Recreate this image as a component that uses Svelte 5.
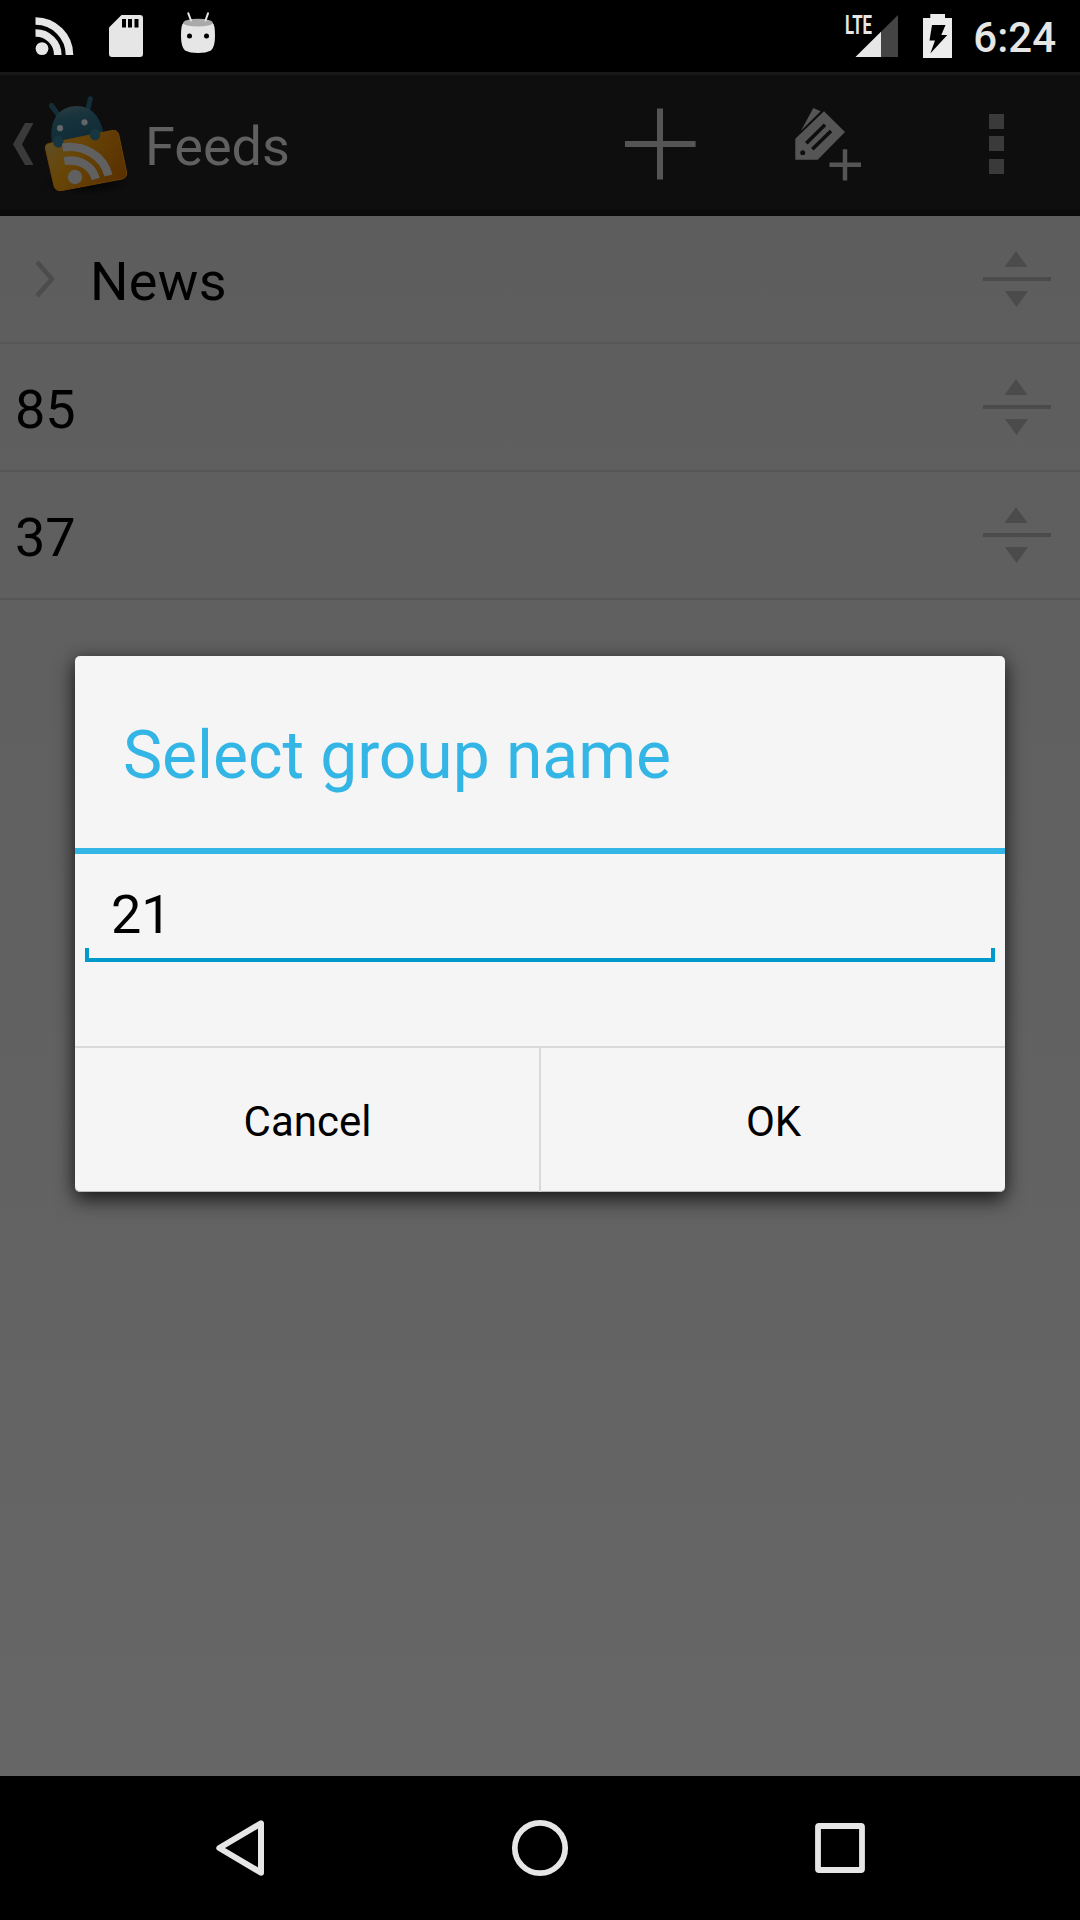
<script>
  const rows = [
    { label: 'News', group: true },
    { label: '85', group: false },
    { label: '37', group: false }
  ];
  let groupName = $state('21');
</script>

<div class="screen">
  <header class="status">
    <div class="notifications">
      <svg width="39" height="38" viewBox="35 17 39 38">
        <circle cx="42" cy="48.6" r="6.4" fill="#e6e6e6" />
        <path d="M35.5 21A34 34 0 0 1 69.5 55M35.5 33A22 22 0 0 1 57.8 55" fill="none" stroke="#e6e6e6" stroke-width="7.6" />
      </svg>
      <svg width="34" height="42" viewBox="109 15 34 42">
        <path d="M121.5 15H140a3 3 0 0 1 3 3V54a3 3 0 0 1-3 3H112a3 3 0 0 1-3-3V27.5Z" fill="#e6e6e6" />
        <path d="M122 19h4v8.500h-4zM128 19h4v8.500h-4zM134.500 19h4v8.500h-4z" fill="#000" />
      </svg>
      <svg width="34" height="42" viewBox="181 12 34 42">
        <path d="M183.500 23Q181 24 181 36Q181 47 185 50.500Q190 53 198 53Q206 53 211 50.500Q215 47 215 36Q215 24 212.500 23Z" fill="#e6e6e6" />
        <ellipse cx="198" cy="22.700" rx="14.800" ry="3.900" fill="#aaa" />
        <path d="M188.300 13.300L191 20.500M208 13.300L205.500 20.500" stroke="#e6e6e6" stroke-width="2" stroke-linecap="round" />
        <circle cx="189.500" cy="36" r="2.500" fill="#000" />
        <circle cx="206.500" cy="36" r="2.500" fill="#000" />
      </svg>
    </div>
    <div class="system">
      <svg width="57" height="60" viewBox="841 6 57 60">
        <path d="M855.500 57L898 15V57Z" fill="#444" />
        <path d="M855.500 57L881 31.800V57Z" fill="#e6e6e6" />
        <text class="lte" x="845" y="33.800" textLength="27" lengthAdjust="spacingAndGlyphs">LTE</text>
      </svg>
      <svg width="29" height="44" viewBox="923 14 29 44">
        <path d="M923 18H930.300V14H945V18H952V58H923Z" fill="#ececec" />
        <path d="M932 25H945.500L941.300 35H947.300L930.300 53.500L935 40.500H929.500Z" fill="#000" />
      </svg>
      <span class="clock">6:24</span>
    </div>
  </header>

  <nav class="actionbar">
    <svg class="up" width="21" height="42" viewBox="13 123 21 42">
      <path d="M25 123H33.500L22 144.300L33.500 165H25L13 144.300Z" fill="#3a3a3a" />
    </svg>
    <svg class="logo" width="96" height="102" viewBox="38 94 96 102">
      <defs>
        <linearGradient id="card" x1="0" y1="0.300" x2="1" y2="0.700">
          <stop offset="0" stop-color="#5f4d25" />
          <stop offset="0.300" stop-color="#684607" />
          <stop offset="1" stop-color="#5a3000" />
        </linearGradient>
        <linearGradient id="head" x1="0.300" y1="0" x2="0.600" y2="1">
          <stop offset="0" stop-color="#2b3c42" />
          <stop offset="0.300" stop-color="#17333c" />
          <stop offset="1" stop-color="#0f2a34" />
        </linearGradient>
        <radialGradient id="ground">
          <stop offset="0" stop-color="#000" stop-opacity="0.800" />
          <stop offset="1" stop-color="#000" stop-opacity="0" />
        </radialGradient>
      </defs>
      <ellipse cx="86" cy="183" rx="46" ry="12" fill="url(#ground)" />
      <path d="M51.500 105.500L57.500 114M90.300 98.800L88 109" stroke="#132e38" stroke-width="5" stroke-linecap="round" />
      <path d="M52 143C48.500 123 57 106.300 77 106C91 106 101 117 103.500 134Z" fill="url(#head)" />
      <path d="M48.500 143.500L112 130.500Q117.500 129.500 118.800 135L126.500 172Q127.500 177.500 122 179L62 190.500Q55.500 191.500 54 186L45.500 149Q44.500 144.500 48.500 143.500Z" fill="url(#card)" stroke="#6b4206" stroke-width="1" />
      <ellipse cx="58.300" cy="141.500" rx="5.200" ry="6.200" fill="#17363f" />
      <ellipse cx="95" cy="134.500" rx="5.200" ry="6" fill="#17363f" />
      <circle cx="60" cy="128.200" r="3.100" fill="#626668" />
      <circle cx="84.500" cy="122.300" r="3.100" fill="#626668" />
      <circle cx="75" cy="177" r="7.200" fill="#606060" />
      <path d="M62.500 147.500C83 144.500 103 155 108.500 175.500M64.300 161C80 158.500 92 166 95.800 179" fill="none" stroke="#606060" stroke-width="8.300" />
    </svg>
    <h1>Feeds</h1>
    <div class="actions">
      <svg width="72" height="72" viewBox="625 108 72 72">
        <path d="M660 108.500V179.500M624.800 144H695.600" stroke="#555" stroke-width="6" />
      </svg>
      <svg width="67" height="74" viewBox="795 107 67 74">
        <path d="M795.300 138.700L824 111.300L845 132L817.700 159.800H795.300ZM801 130.700L813.300 108L820.700 111.300Z" fill="#555" />
        <path d="M806.300 143.300L825 124.800M812.300 149.300L831 131" stroke="#0e0e0e" stroke-width="3.600" />
        <circle cx="802.700" cy="152.700" r="2.500" fill="#0e0e0e" />
        <path d="M845 149.300V180.500M829.500 164.700H861" stroke="#555" stroke-width="4.500" />
      </svg>
      <svg width="15" height="60" viewBox="989 114 15 60">
        <path d="M989 114h15v15h-15zM989 136h15v15h-15zM989 159h15v15h-15z" fill="#3a3a3a" />
      </svg>
    </div>
  </nav>

  <main class="content">
    <ul>
      {#each rows as row}
        <li class:group={row.group}>
          {#if row.group}
            <svg class="chevron" width="20" height="38" viewBox="35 260 20 38">
              <path d="M37 262L52 279L37 296" fill="none" stroke="#4c4c4c" stroke-width="4.600" />
            </svg>
          {/if}
          <span class="label">{row.label}</span>
          <svg class="handle" width="68" height="56" viewBox="983 251 68 56">
            <path d="M983 277h68v4h-68zM1016 251L1027.500 267H1004.500ZM1005 291H1028L1016.500 307Z" fill="#4b4b4b" />
          </svg>
        </li>
      {/each}
    </ul>
  </main>

  <footer class="softkeys">
    <svg width="60" height="60" viewBox="210 1818 60 60">
      <path d="M219.300 1848L261 1823.300V1872.700Z" fill="none" stroke="#e6e6e6" stroke-width="6" stroke-linejoin="round" />
    </svg>
    <svg width="60" height="60" viewBox="510 1818 60 60">
      <circle cx="540" cy="1848" r="25.200" fill="none" stroke="#e6e6e6" stroke-width="5.700" />
    </svg>
    <svg width="60" height="60" viewBox="810 1818 60 60">
      <rect x="818" y="1826" width="44" height="44" rx="1" fill="none" stroke="#e6e6e6" stroke-width="5.800" stroke-linejoin="round" />
    </svg>
  </footer>

  <section class="dialog" role="dialog" aria-labelledby="dialog-title">
    <h2 id="dialog-title">Select group name</h2>
    <div class="body">
      <div class="field">
        <input type="text" aria-label="Group name" bind:value={groupName} />
      </div>
    </div>
    <div class="buttons">
      <button type="button">Cancel</button>
      <button type="button">OK</button>
    </div>
  </section>
</div>

<style>
  :global(body) {
    background: #000;
  }
  .screen {
    position: relative;
    display: flex;
    flex-direction: column;
    width: 1080px;
    height: 1920px;
    overflow: hidden;
    background: #000;
    color: #000;
    font-family: Roboto, 'Liberation Sans', sans-serif;
  }
  svg {
    display: block;
    flex: none;
  }
  h1,
  h2,
  ul {
    margin: 0;
    padding: 0;
    font-weight: 400;
    list-style: none;
  }

  .status {
    display: flex;
    justify-content: space-between;
    box-sizing: border-box;
    height: 72px;
    padding: 0 24px 0 35px;
  }
  .notifications,
  .system {
    display: flex;
    align-items: center;
  }
  .notifications {
    gap: 35px;
  }
  .notifications svg:last-child {
    margin: 0 0 6px 3px;
  }
  .system {
    gap: 25px;
  }
  .clock {
    margin-left: -4px;
    color: #e6e6e6;
    font-size: 42px;
    font-weight: 500;
    line-height: 72px;
    padding-top: 3px;
  }
  .lte {
    fill: #e6e6e6;
    font-size: 26px;
    font-weight: 700;
  }

  .actionbar {
    display: flex;
    align-items: center;
    box-sizing: border-box;
    height: 144px;
    padding: 0 76px 0 13px;
    border-top: 3px solid #181818;
    border-bottom: 6px solid #0a0a0a;
    background: #0e0e0e;
  }
  .up {
    margin-top: 3px;
  }
  .logo {
    margin: 5px 0 0 4px;
  }
  .actionbar h1 {
    margin: 8px 0 0 11px;
    color: #606060;
    font-size: 54px;
    line-height: 64px;
  }
  .actions {
    display: flex;
    align-items: center;
    gap: 98px;
    margin: 3px 0 0 auto;
  }
  .actions svg:last-child {
    margin-left: 29px;
  }

  .content {
    flex: 1;
    background: linear-gradient(#5d5d5d, #666);
  }
  li {
    display: flex;
    align-items: center;
    box-sizing: border-box;
    height: 128px;
    padding: 0 29px 0 15px;
    border-bottom: 2px solid #565656;
  }
  li.group {
    padding-left: 35px;
  }
  .chevron {
    margin-right: 35px;
  }
  .label {
    padding-top: 6px;
    font-size: 54px;
    line-height: 64px;
  }
  .group .label {
    letter-spacing: 0.300px;
  }
  .handle {
    margin-left: auto;
  }

  .softkeys {
    display: flex;
    align-items: center;
    justify-content: space-between;
    box-sizing: border-box;
    height: 144px;
    padding: 0 210px;
    background: #000;
  }

  .dialog {
    position: absolute;
    top: 656px;
    left: 75px;
    display: flex;
    flex-direction: column;
    width: 930px;
    height: 536px;
    border-radius: 5px;
    background: #f5f5f5;
    box-shadow:
      inset 0 -1px 0 #bbb,
      0 8px 20px rgba(0, 0, 0, 0.7),
      0 0 14px rgba(0, 0, 0, 0.2);
  }
  .dialog h2 {
    box-sizing: border-box;
    height: 198px;
    padding: 5px 48px 0;
    border-bottom: 6px solid #33b5e5;
    color: #33b5e5;
    font-size: 66px;
    line-height: 190px;
    letter-spacing: -0.080px;
  }
  .body {
    flex: 1;
    padding: 0 10px;
  }
  .field {
    display: flex;
    box-sizing: border-box;
    height: 108px;
    border-bottom: 4px solid #0099cc;
    align-items: flex-end;
  }
  .field::before,
  .field::after {
    content: '';
    width: 4px;
    height: 10px;
    background: #0099cc;
  }
  input {
    flex: 1;
    min-width: 0;
    height: 104px;
    box-sizing: border-box;
    padding: 17px 22px 0;
    border: 0;
    outline: 0;
    background: none;
    color: #000;
    font: 54px Roboto, 'Liberation Sans', sans-serif;
  }
  .buttons {
    display: grid;
    grid-template-columns: 466px 1fr;
    box-sizing: border-box;
    height: 146px;
    border-top: 2px solid #d9d9d9;
  }
  button {
    padding: 2px 0 0 1px;
    border: 0;
    background: none;
    color: #000;
    font: 42px Roboto, 'Liberation Sans', sans-serif;
  }
  button:first-child {
    border-right: 2px solid #d9d9d9;
  }
</style>
